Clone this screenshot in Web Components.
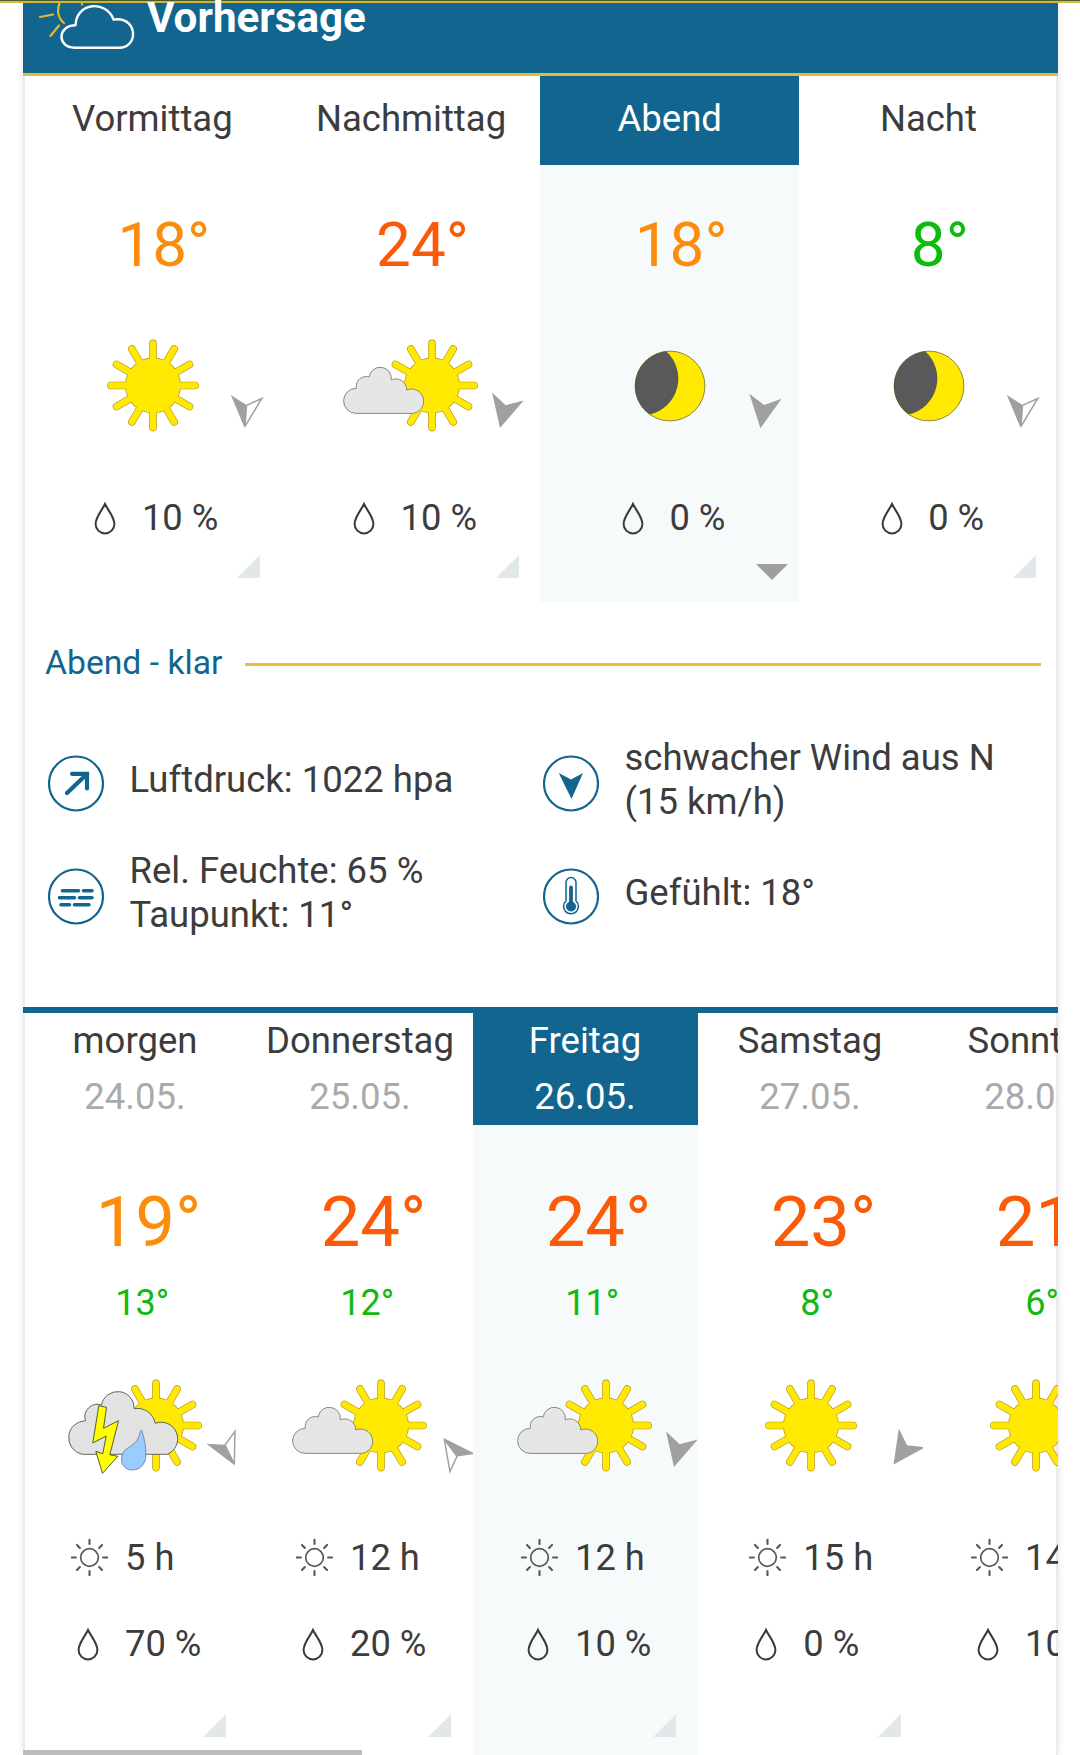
<!DOCTYPE html>
<html lang="de">
<head>
<meta charset="utf-8">
<title>Vorhersage</title>
<style>
html,body{margin:0;background:#fff}
body{height:1755px;overflow:hidden;font-family:Roboto,"Liberation Sans",sans-serif;font-size:36.5px;color:#3c3c3c}
</style>
</head>
<body>
<weather-page></weather-page>
<script>
const rays = (n, r1, r2, attrs) => Array.from({length:n}, (_, i) =>
  `<line x1="0" y1="${-r1}" x2="0" y2="${-r2}" transform="rotate(${i*360/n})" ${attrs}/>`).join('');
const sun = x => `<g transform="translate(${x} -.5)">
  <g>${rays(12, 24, 42.1, 'stroke="#b08f1c" stroke-width="7.6" stroke-linecap="round"')}<circle r="27.9" fill="#b08f1c"/></g>
  <g>${rays(12, 24, 42.1, 'stroke="#ffe900" stroke-width="6.4" stroke-linecap="round"')}<circle r="27.2" fill="#ffe900"/></g></g>`;
const moon = `<circle r="35" fill="#ffe900"/><path d="M-3.8-34.8A37 37 0 0 1-20.2 28.6A35 35 0 0 1-3.8-34.8Z" fill="#595959"/><circle r="34.9" fill="none" stroke="#5d5a35" stroke-width=".7"/>`;
const WEATHER = {
  sun: sun(0),
  cloudy: sun(20) + `<path d="M-56 27.4A12.5 12.5 0 0 1-55.7 2.3A10 10 0 0 1-42.8-9A11 11 0 0 1-20.7-6.2A11 11 0 0 1-5.3 4A12.2 12.2 0 1 1 .2 27.4Z" fill="#e6e6e6" stroke="#6d6d6d" stroke-width=".8"/>`,
  storm: sun(20) + `<path d="M-54 28.3A17 17 0 0 1-50.5-5.3A12.5 12.5 0 0 1-34.5-21A16.5 16.5 0 0 1-1.8-17.3A18 18 0 0 1 19.2-2.7A16.5 16.5 0 1 1 31 28.3Z" fill="#e2e2e2" stroke="#555" stroke-width=".9"/>
   <path d="M-37.2-19.3L-29.5-17.7L-32.5 3.3L-17.5-4.3L-26.2 29.7L-18.2 31.3L-33.5 48.3L-40.2 26.3L-33.2 28.7L-29.8 11L-43.2 18Z" fill="#ffff00" stroke="#4b4b20" stroke-width=".9" transform="translate(0 -1)"/>
   <path d="M5.600 5.300C8.600 14 10.200 22 9.800 31C9.200 40.500 3 45-3.800 45C-10.500 45-14.500 40.500-14.500 34C-14.500 21.500-2 24 3 11.500C4 9 4 5 5.600 5.300Z" fill="#99ccff" stroke="#667" stroke-width=".7" transform="translate(0 -1)"/>`,
  moon
};
const dropSvg = `<svg width="37" height="38" viewBox="0 0 37 38"><path d="M18 5C15.500 10.500 8.600 18 8.600 25A9.400 9.400 0 0 0 27.400 25C27.400 18 20.500 10.500 18 5Z" fill="none" stroke="#3a3a3a" stroke-width="2"/></svg>`;
const hoursSvg = `<svg width="37" height="38" viewBox="-18.500 -19.500 37 38"><g stroke="#585858"><circle r="8.800" fill="none" stroke-width="1.700"/>${rays(8, 13.600, 17.700, 'stroke-width="2.100" stroke-linecap="round"')}</g></svg>`;

const define = (name, css, html) => customElements.define(name, class extends HTMLElement {
  connectedCallback() {
    if (this.shadowRoot) return;
    this.attachShadow({mode:'open'}).innerHTML = `<style>*{box-sizing:border-box}svg{display:block}${css}</style>` +
      (typeof html === 'function' ? html(this) : html);
  }
});

define('weather-icon', ':host{display:block;width:160px;height:110px}svg{overflow:visible}',
  e => `<svg width="160" height="110" viewBox="-80 -55 160 110">${WEATHER[e.getAttribute('kind')]}</svg>`);

define('wind-arrow', ':host{display:block;width:44px;height:44px}svg{overflow:visible}', e => {
  const shape = e.hasAttribute('light')
    ? '<path d="M0 16.500L-16.300-16L0-7Z" fill="#a0a0a0"/><path d="M0 14.500L0-6.600L14.800-14.600Z" fill="none" stroke="#a0a0a0" stroke-width="1.500"/>'
    : '<path d="M0 16.500L-16.300-16L0-7L16.300-16Z" fill="#a0a0a0"/>';
  return `<svg width="44" height="44" viewBox="-22 -22 44 44"><g transform="rotate(${e.getAttribute('turn')})">${shape}</g></svg>`;
});

define('temp-value', `:host{display:block;text-align:center;padding-left:.37em;white-space:nowrap}`, '<slot></slot>');

define('day-part', `
 :host{display:block;position:relative;flex:0 0 258.700px;height:526px}
 :host([active]){background:#f6fafb}
 .tab{height:89px;line-height:86px;text-align:center}
 :host([active]) .tab{background:#11658e;color:#fff}
 temp-value{font-size:62px;line-height:159px;height:158px}
 .icon{height:126px;display:flex;align-items:center;justify-content:center;padding-left:1px}
 .rain{height:137px;display:flex;align-items:center;justify-content:center;gap:17.500px;white-space:nowrap;font-size:36.300px;padding-left:1px}
 wind-arrow{position:absolute;left:200.500px;top:314px}
 .corner{position:absolute;right:21.500px;bottom:24px}
 .open{position:absolute;right:11px;bottom:22px}`,
 e => `<div class="tab">${e.getAttribute('name')}</div>
 <temp-value style="color:${e.getAttribute('color')}">${e.getAttribute('temp')}</temp-value>
 <div class="icon"><weather-icon kind="${e.getAttribute('kind')}"></weather-icon></div>
 <div class="rain">${dropSvg}<span>${e.getAttribute('rain')}</span></div>
 <wind-arrow turn="${e.getAttribute('turn')}" ${e.hasAttribute('light')?'light':''}></wind-arrow>
 ${e.hasAttribute('active')
   ? '<svg class="open" width="32" height="16"><path d="M0 0H32L16 16Z" fill="#9e9e9e"/></svg>'
   : '<svg class="corner" width="23" height="23"><path d="M0 23L23 0V23Z" fill="#e2e7e9"/></svg>'}`);

define('day-column', `
 :host{display:block;position:relative;flex:none;width:225px;height:742px;overflow:hidden}
 :host([active]){background:#f6fafb}
 .tab{height:112px;line-height:56px;text-align:center;padding-right:1px}
 .date{color:#aaa}
 :host([active]) .tab{background:#11658e}
 :host([active]) .tab div{color:#fff}
 .high{font-size:70.600px;line-height:120px;padding-top:37px}
 .low{font-size:36px;line-height:42px;color:#10b910}
 .icon{height:178px;margin-top:13px;display:flex;align-items:center;justify-content:center}
 .stats{display:grid;grid-template-columns:37px auto;column-gap:17.500px;grid-auto-rows:86px;align-items:center;justify-content:center;white-space:nowrap;font-size:36.300px;padding-left:1px;margin-top:-1px}
 .stats .drop{position:relative;left:-1px;top:1px}
 wind-arrow{position:absolute;left:183px;top:416px}
 .corner{position:absolute;right:22px;top:701px}`,
 e => `<div class="tab"><div>${e.getAttribute('name')}</div><div class="date">${e.getAttribute('date')}</div></div>
 <temp-value class="high" style="color:${e.getAttribute('color')}">${e.getAttribute('high')}</temp-value>
 <temp-value class="low">${e.getAttribute('low')}</temp-value>
 <div class="icon"><weather-icon kind="${e.getAttribute('kind')}"></weather-icon></div>
 <div class="stats">${hoursSvg}<span>${e.getAttribute('hours')}</span><div class="drop">${dropSvg}</div><span>${e.getAttribute('rain')}</span></div>
 <wind-arrow turn="${e.getAttribute('turn')}" ${e.hasAttribute('light')?'light':''}></wind-arrow>
 <svg class="corner" width="23" height="23"><path d="M0 23L23 0V23Z" fill="#e2e7e9"/></svg>`);

const DETAIL = {
  pressure: '<g fill="none" stroke="#11658e" stroke-width="4.200" stroke-linecap="round" stroke-linejoin="round"><path d="M-9 9.500L11-9.500"/><path d="M-4-9.700H11V5" stroke-linejoin="miter"/></g>',
  wind: '<path d="M-12.300-10.500L0-4L12-10.500L.500 15.500Z" fill="#11658e"/>',
  humidity: '<g stroke="#11658e" stroke-width="3.600" stroke-linecap="round"><path d="M-13.500-5.800H2.500M7.500-5.800H16M-16.500 1.200H-1.500M3.500 1.200H16M-15 8.300H-6.500M-1.500 8.300H13"/></g>',
  feel: '<path d="M-5-14A5 5 0 0 1 5-14V4.500A7.400 7.400 0 1 1-5 4.500Z" fill="#fff" stroke="#11658e" stroke-width="1.500"/><path d="M0-9V9" stroke="#11658e" stroke-width="3.800" stroke-linecap="round"/><circle cy="10" r="5" fill="#11658e"/>'
};
define('detail-item', `
 :host{display:flex;align-items:center;gap:25.500px;height:113px;line-height:44px}
 .text{padding-bottom:7px;white-space:nowrap}`,
 e => `<svg width="56" height="57" viewBox="-28 -28.500 56 57"><circle r="27" fill="none" stroke="#11658e" stroke-width="2.200"/>${DETAIL[e.getAttribute('kind')]}</svg><div class="text"><slot></slot></div>`);

define('detail-panel', `
 :host{display:block;height:405px;padding:40px 17px 0 22px}
 .head{display:flex;align-items:center;gap:23px;height:45px;color:#11658e;font-size:33.700px}
 .head span{padding-bottom:4px}
 .head i{flex:1;height:3px;background:#ecc03c}
 .grid{display:grid;grid-template-columns:495px auto;padding:40px 0 0 3px}`,
 `<div class="head"><span>Abend - klar</span><i></i></div>
 <div class="grid">
 <detail-item kind="pressure">Luftdruck: 1022 hpa</detail-item>
 <detail-item kind="wind">schwacher Wind aus N<br>(15 km/h)</detail-item>
 <detail-item kind="humidity">Rel. Feuchte: 65 %<br>Taupunkt: 11°</detail-item>
 <detail-item kind="feel">Gefühlt: 18°</detail-item></div>`);

define('forecast-header', `
 :host{display:flex;height:73px;background:#11658e;border-bottom:3px solid #e2bd3c;color:#fff;padding-left:14px;gap:10px}
 b{font-size:42.200px;font-weight:700;line-height:30px;height:30px}`,
 `<svg width="100" height="50" viewBox="37 3 100 50"><g fill="none" stroke-linecap="round" stroke-linejoin="round">
 <path d="M60.500 1C56.500 9 57.500 18 64 23M40 17L53 14.500M50.500 36L59 25.500M82 3V4.500" stroke="#e3b92e" stroke-width="2.200"/>
 <path d="M74.500 47.700C57 47.700 57 25.300 75.500 25.300C76.500 1.300 107 .300 113.500 19.600C127.500 17.300 133.500 27 133 35.300C132.500 42.300 127 47.700 119.500 47.700Z" stroke="#fff" stroke-width="2.400"/></g></svg><b>Vorhersage</b>`);

define('weather-page', `
 :host{display:block;height:1755px;overflow:hidden}
 .strip{height:3px;background:linear-gradient(#496332 0 1.500px,#dcbc3d 1.500px 3px)}
 main{margin:0 22px 0 23px;width:1035px;height:1752px;background:#fff;box-shadow:inset 2px 0 #ebebeb,inset -2px 0 #ebebeb,0 0 7px rgba(0,0,0,.1)}
 .parts{display:flex}
 .days{display:flex;border-top:6px solid #11658e;height:748px;overflow:hidden;position:relative}
 .bar{position:absolute;left:0;bottom:0;width:339px;height:5px;background:#bdbdbd}`,
 `<div class="strip"></div><main>
 <forecast-header></forecast-header>
 <div class="parts">
 <day-part name="Vormittag" temp="18°" color="#fc8c0c" kind="sun" rain="10 %" turn="4" light></day-part>
 <day-part name="Nachmittag" temp="24°" color="#fb5b08" kind="cloudy" rain="10 %" turn="14"></day-part>
 <day-part name="Abend" temp="18°" color="#fc8c0c" kind="moon" rain="0 %" turn="9" active></day-part>
 <day-part name="Nacht" temp="8°" color="#0cbb0c" kind="moon" rain="0 %" turn="4" light></day-part>
 </div>
 <detail-panel></detail-panel>
 <div class="days">
 <day-column name="morgen" date="24.05." high="19°" low="13°" color="#fc8c0c" kind="storm" hours="5 h" rain="70 %" turn="-26" light></day-column>
 <day-column name="Donnerstag" date="25.05." high="24°" low="12°" color="#fb5b08" kind="cloudy" hours="12 h" rain="20 %" turn="143" light></day-column>
 <day-column name="Freitag" date="26.05." high="24°" low="11°" color="#fb5b08" kind="cloudy" hours="12 h" rain="10 %" turn="14" active></day-column>
 <day-column name="Samstag" date="27.05." high="23°" low="8°" color="#fb5b08" kind="sun" hours="15 h" rain="0 %" turn="35"></day-column>
 <day-column name="Sonntag" date="28.05." high="21°" low="6°" color="#fb5b08" kind="sun" hours="14 h" rain="10 %" turn="35"></day-column>
 <div class="bar"></div></div></main>`);
</script>
</body>
</html>
